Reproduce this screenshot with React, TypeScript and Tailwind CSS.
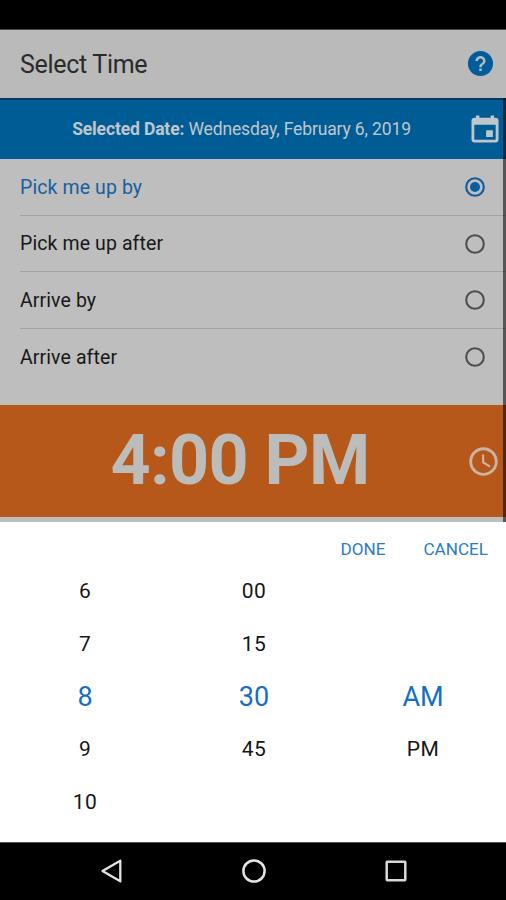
import { IoMdCalendar, IoMdHelpCircle, IoMdTime } from "react-icons/io";

const OPTIONS = ["Pick me up by", "Pick me up after", "Arrive by", "Arrive after"];

const COLUMNS = [
  ["6", "7", "8", "9", "10"],
  ["00", "15", "30", "45", ""],
  ["", "", "AM", "PM", ""],
];

function Radio({ checked }: { checked: boolean }) {
  return (
    <svg
      className={`size-5 ${checked ? "text-[#0d5ca0]" : "text-[#4e4e4e]"}`}
      viewBox="0 0 20 20"
      fill="none"
    >
      <circle cx="10" cy="10" r="8.8" stroke="currentColor" strokeWidth="2.1" />
      {checked && <circle cx="10" cy="10" r="5" fill="currentColor" />}
    </svg>
  );
}

function Option({ label, checked, last }: { label: string; checked: boolean; last: boolean }) {
  return (
    <div
      className={`ml-5 flex h-[56.5px] items-center justify-between pt-px pr-[21px] text-[19.5px] tracking-[0.1px] ${
        last ? "" : "border-b border-[#a3a3a3]"
      } ${checked ? "text-[#175f9e]" : "text-[#181818]"}`}
    >
      <span>{label}</span>
      <Radio checked={checked} />
    </div>
  );
}

export default function App() {
  return (
    <div className="flex h-[900px] w-[506px] flex-col overflow-hidden bg-black font-['Roboto',sans-serif]">
      <div className="h-[30px] shrink-0 border-b border-[#4a4a4a] bg-black" />
      <header className="flex h-[68px] shrink-0 items-center justify-between bg-[#bababa] pr-[10px] pl-[20px]">
        <h1 className="pt-[2px] text-[25px] tracking-[-0.3px] text-[#2a2a2a]">Select Time</h1>
        <IoMdHelpCircle className="mb-px size-[31px] text-[#005d9b]" />
      </header>

      <div className="relative flex h-[424px] shrink-0 flex-col bg-[#bebebe]">
        <div className="flex h-[61px] shrink-0 items-center border-t-2 border-[#003765] bg-[#005c95] pr-[3px] pl-[16px] text-[#c0c7cc]">
          <p className="flex-1 text-center text-[17.5px] tracking-[-0.14px]">
            <b className="font-bold">Selected Date:</b> Wednesday, February 6, 2019
          </p>
          <IoMdCalendar className="mb-[2px] size-[36px]" />
        </div>
        <div className="h-[246px] shrink-0">
          {OPTIONS.map((label, i) => (
            <Option key={label} label={label} checked={i === 0} last={i === OPTIONS.length - 1} />
          ))}
        </div>
        <div className="flex h-[112px] shrink-0 items-center bg-[#b5581a] pr-[5px] pl-[14px] text-[#bcbcba]">
          <p className="flex-1 pb-px text-center text-[70px] font-bold tracking-[-0.7px]">4:00 PM</p>
          <IoMdTime className="size-[35px] text-[#cdbfb4]" />
        </div>
        <div className="absolute top-0 right-0 h-full w-[3px] bg-black/55" />
      </div>

      <section className="flex h-[320px] shrink-0 flex-col bg-white">
        <div className="flex h-[43px] shrink-0 items-end justify-end gap-[38px] pr-[18px] pb-[2px] text-[17.1px] text-[#2b7cc6]">
          <button>DONE</button>
          <button>CANCEL</button>
        </div>
        <div className="grid grid-cols-[170px_168px_170px]">
          {COLUMNS.map((items, c) => (
            <div key={c} className="flex flex-col text-center">
              {items.map((item, i) => (
                <div
                  key={i}
                  className={`flex h-[52.75px] items-center justify-center ${
                    i === 2 ? "text-[27px] text-[#1470c4]" : "pt-px text-[21px] tracking-[0.4px] text-[#161616]"
                  }`}
                >
                  {item}
                </div>
              ))}
            </div>
          ))}
        </div>
      </section>

      <nav className="flex h-[58px] shrink-0 items-center justify-between border-t border-[#555] bg-black pr-[96px] pb-px pl-[97px]">
        <svg className="size-7" viewBox="0 0 28 28" fill="none" stroke="#e4e4e4" strokeWidth="2.3">
          <path d="M23.3 3.7 L5.5 14 L23.3 24.3 Z" strokeLinejoin="round" />
        </svg>
        <svg className="size-7" viewBox="0 0 28 28" fill="none" stroke="#e4e4e4" strokeWidth="2.5">
          <circle cx="14" cy="14" r="10.6" />
        </svg>
        <svg className="size-7" viewBox="0 0 28 28" fill="none" stroke="#d8d8d8" strokeWidth="2.5">
          <rect x="4.7" y="4.7" width="18.6" height="18.6" rx="0.5" />
        </svg>
      </nav>
    </div>
  );
}
